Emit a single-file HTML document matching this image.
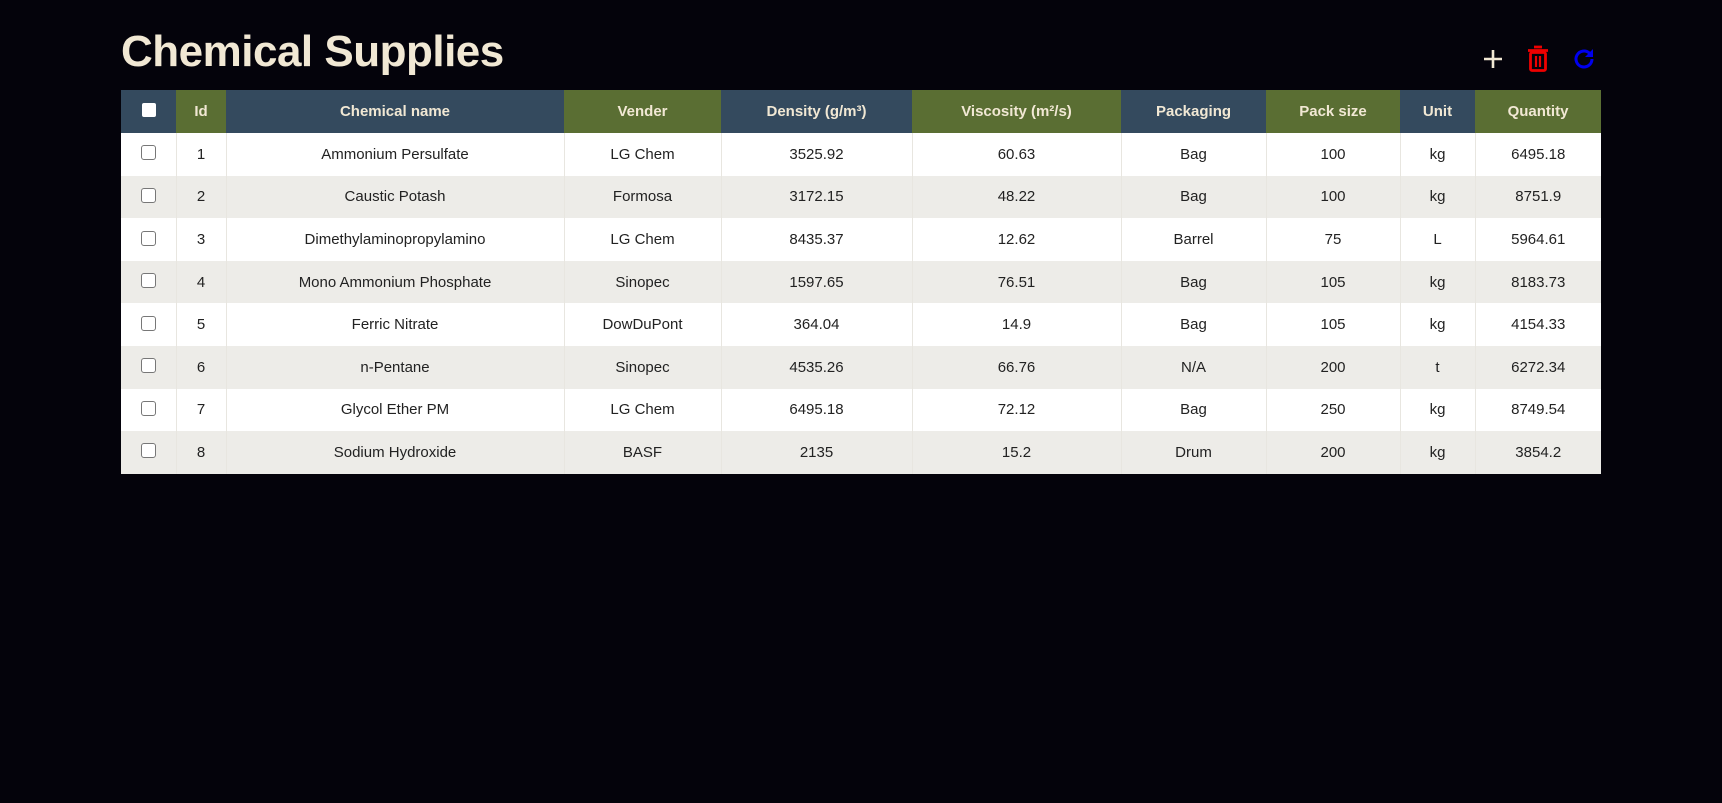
<!DOCTYPE html>
<html><head><meta charset="utf-8"><style>
body{margin:0;background:#04030b;width:1722px;height:803px;overflow:hidden;font-family:"Liberation Sans",sans-serif}
h1{position:absolute;left:121px;top:27px;margin:0;font-size:44px;font-weight:bold;color:#f1e8d4;letter-spacing:-0.5px}
table{position:absolute;left:121px;top:90px;width:1480px;border-collapse:collapse;table-layout:fixed}
th{height:43px;color:#f1e8d4;font-size:15px;font-weight:bold;padding:0}
th.b{background:#344a5e}th.g{background:#5a6e33}
td{height:42.6px;padding:0;text-align:center;font-size:15px;color:#222;border-left:1px solid #e8e6e0}
tr:nth-child(even) td{background:#edece8}
tr:nth-child(odd) td{background:#fff}
tbody tr td:first-child{border-left:none}
.cb{display:inline-block;width:13px;height:13px;border:1px solid #777;border-radius:3px;background:#fff;vertical-align:middle;margin-top:-4px}
.hcb{display:inline-block;width:14px;height:14px;background:#fff;border-radius:2px}
.ic{position:absolute;top:47px}
</style></head><body>
<h1>Chemical Supplies</h1>
<svg class="ic" style="left:1481px" width="24" height="24" viewBox="0 0 24 24"><path d="M12 3v18M3 12h18" stroke="#f1e8d4" stroke-width="2.6"/></svg>
<svg class="ic" style="left:1527px;top:45px" width="22" height="28" viewBox="0 0 22 28"><path d="M7 2h8M1 5.5h20" stroke="#e00" stroke-width="2.8"/><rect x="3.5" y="7.5" width="15" height="18" rx="1.5" fill="none" stroke="#e00" stroke-width="2.8"/><path d="M9 11v11M13 11v11" stroke="#e00" stroke-width="2.2"/></svg>
<svg class="ic" style="left:1572px" width="24" height="24" viewBox="0 0 24 24"><path d="M20 12a8 8 0 1 1-2.5-5.8" fill="none" stroke="#00e" stroke-width="3"/><path d="M21 2v8h-8z" fill="#00e"/></svg>
<table>
<colgroup><col style="width:55px"><col style="width:50px"><col style="width:338px"><col style="width:157px"><col style="width:191px"><col style="width:209px"><col style="width:145px"><col style="width:134px"><col style="width:75px"><col style="width:126px"></colgroup>
<thead><tr><th class="b"><span class="hcb"></span></th><th class="g">Id</th><th class="b">Chemical name</th><th class="g">Vender</th><th class="b">Density (g/m³)</th><th class="g">Viscosity (m²/s)</th><th class="b">Packaging</th><th class="g">Pack size</th><th class="b">Unit</th><th class="g">Quantity</th></tr></thead>
<tbody>
<tr><td><span class="cb"></span></td><td>1</td><td>Ammonium Persulfate</td><td>LG Chem</td><td>3525.92</td><td>60.63</td><td>Bag</td><td>100</td><td>kg</td><td>6495.18</td></tr>
<tr><td><span class="cb"></span></td><td>2</td><td>Caustic Potash</td><td>Formosa</td><td>3172.15</td><td>48.22</td><td>Bag</td><td>100</td><td>kg</td><td>8751.9</td></tr>
<tr><td><span class="cb"></span></td><td>3</td><td>Dimethylaminopropylamino</td><td>LG Chem</td><td>8435.37</td><td>12.62</td><td>Barrel</td><td>75</td><td>L</td><td>5964.61</td></tr>
<tr><td><span class="cb"></span></td><td>4</td><td>Mono Ammonium Phosphate</td><td>Sinopec</td><td>1597.65</td><td>76.51</td><td>Bag</td><td>105</td><td>kg</td><td>8183.73</td></tr>
<tr><td><span class="cb"></span></td><td>5</td><td>Ferric Nitrate</td><td>DowDuPont</td><td>364.04</td><td>14.9</td><td>Bag</td><td>105</td><td>kg</td><td>4154.33</td></tr>
<tr><td><span class="cb"></span></td><td>6</td><td>n-Pentane</td><td>Sinopec</td><td>4535.26</td><td>66.76</td><td>N/A</td><td>200</td><td>t</td><td>6272.34</td></tr>
<tr><td><span class="cb"></span></td><td>7</td><td>Glycol Ether PM</td><td>LG Chem</td><td>6495.18</td><td>72.12</td><td>Bag</td><td>250</td><td>kg</td><td>8749.54</td></tr>
<tr><td><span class="cb"></span></td><td>8</td><td>Sodium Hydroxide</td><td>BASF</td><td>2135</td><td>15.2</td><td>Drum</td><td>200</td><td>kg</td><td>3854.2</td></tr>
</tbody></table>
</body></html>
